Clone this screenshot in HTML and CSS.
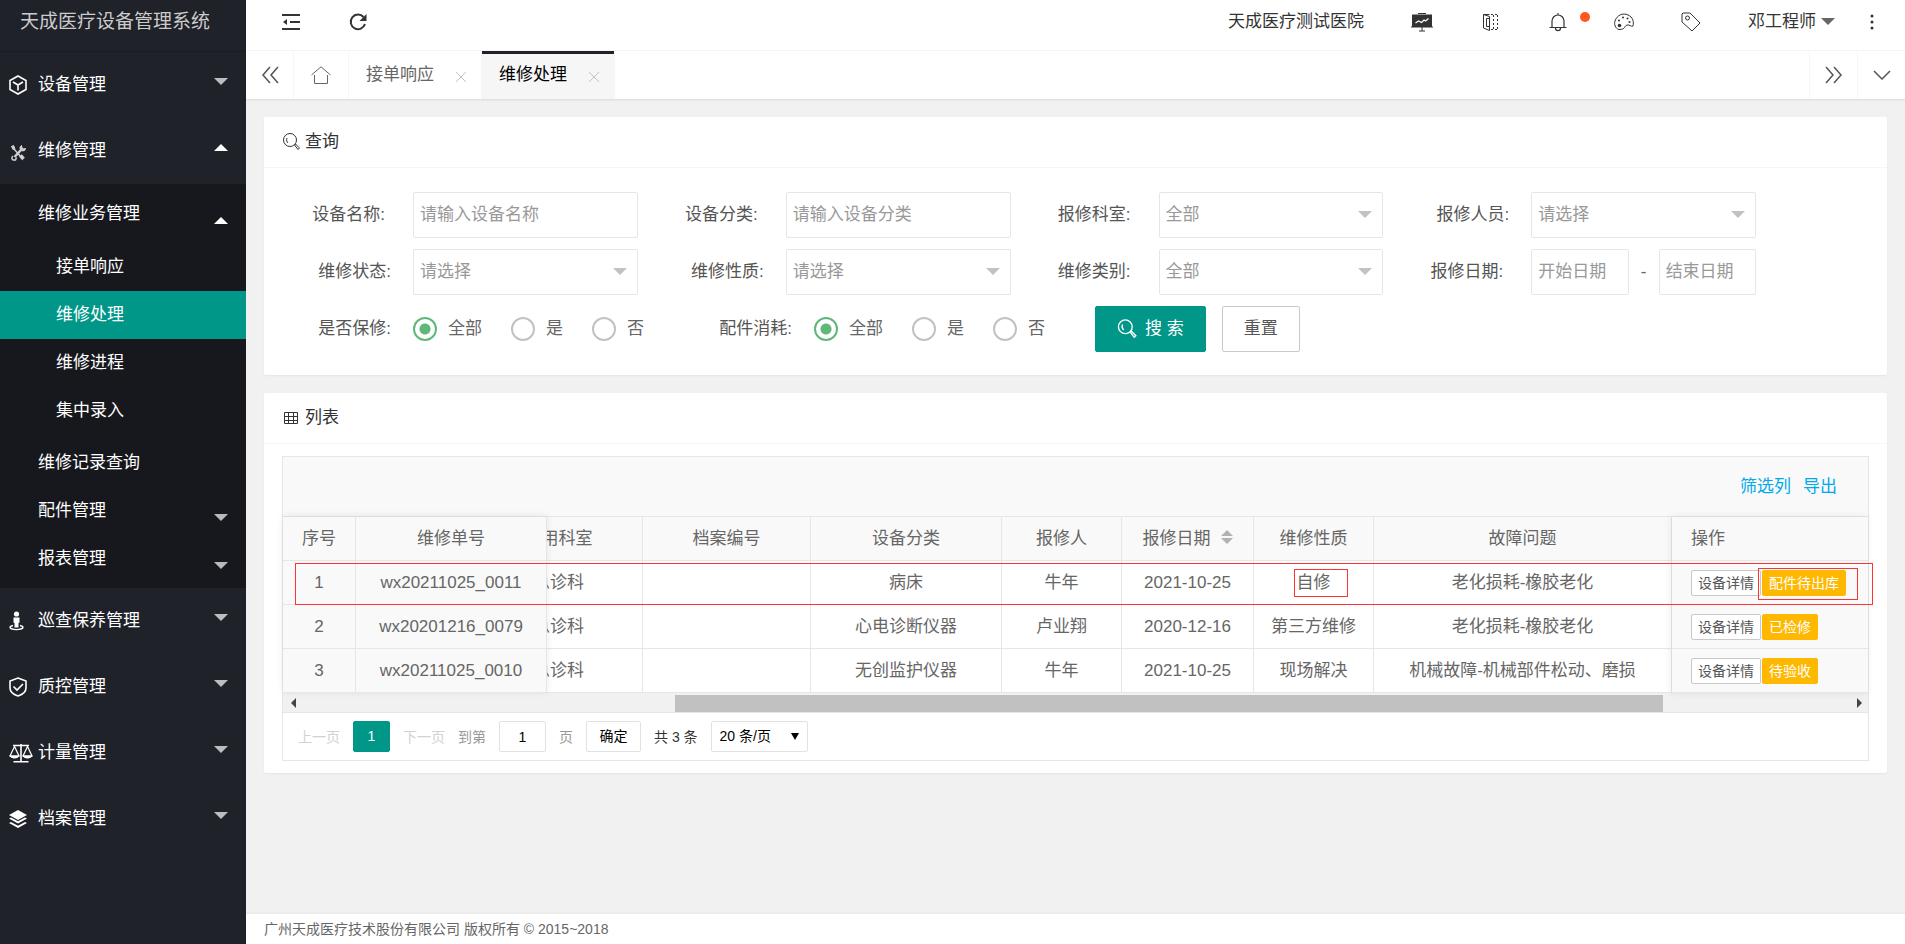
FILE: index.html
```html
<!DOCTYPE html>
<html lang="zh-CN">
<head>
    <meta charset="UTF-8">
    <title>天成医疗设备管理系统</title>
    <link rel="stylesheet" href="styles.css">
</head>
<body>

    <aside class="side">
        <div class="logo">天成医疗设备管理系统</div>
        <nav class="menu">
            <a class="menu-item" href="#">
                <svg class="menu-icon" viewBox="0 0 18 20" fill="none" stroke="currentColor" stroke-width="1.600"><path d="M9 1l8 4.500v9L9 19l-8-4.500v-9z"/><path d="M4 7l5 3 5-3M9 10v5.500"/></svg>
                <span>设备管理</span><i class="caret"></i>
            </a>
            <a class="menu-item" href="#">
                <svg class="menu-icon low" viewBox="0 0 18 20" fill="none" stroke="currentColor"><path d="M5 6l8 9" stroke-width="1.500"/><path d="M2.500 3.500l2-1 1.500 3-2 1z" fill="currentColor"/><path d="M11.500 12.500l3 3.500" stroke-width="3.500"/><path d="M12 7l-6.500 7" stroke-width="2.500"/><path d="M12.500 2.500c-2 1-2 4 0 5s4 0 4-2l-2 .5-1.500-1.500z" fill="currentColor"/><path d="M4 13c-1.500 1-1.500 3 0 4h2.500l1-2.500" stroke-width="1.500"/></svg>
                <span>维修管理</span><i class="caret up"></i>
            </a>
            <div class="submenu">
                <a class="sub-item" href="#"><span>维修业务管理</span><i class="caret up"></i></a>
                <div class="submenu-inner">
                    <a class="sub-item deep" href="#">接单响应</a>
                    <a class="sub-item deep active" href="#">维修处理</a>
                    <a class="sub-item deep" href="#">维修进程</a>
                    <a class="sub-item deep" href="#">集中录入</a>
                </div>
                <a class="sub-item" href="#">维修记录查询</a>
                <a class="sub-item" href="#"><span>配件管理</span><i class="caret"></i></a>
                <a class="sub-item" href="#"><span>报表管理</span><i class="caret"></i></a>
            </div>
            <a class="menu-item" href="#">
                <svg class="menu-icon" viewBox="0 0 18 20"><circle cx="7.500" cy="3" r="2.600" fill="currentColor"/><path d="M4.500 6.500h6v5l-1 .5v4.500h-4V12l-1-.5z" fill="currentColor"/><path d="M4 14.500c-3 .5-4 2-1.500 3.300 2.500 1 7.500 1 10 0 2.500-1.300 1.500-2.800-1.500-3.300" fill="none" stroke="currentColor" stroke-width="1.500"/></svg>
                <span>巡查保养管理</span><i class="caret"></i>
            </a>
            <a class="menu-item" href="#">
                <svg class="menu-icon" viewBox="0 0 18 20" fill="none" stroke="currentColor" stroke-width="1.600"><path d="M9 1l8 3v7c0 4-3.500 6.500-8 8-4.500-1.500-8-4-8-8V4z"/><path d="M4.500 9.500l3.500 3.500 6-6"/></svg>
                <span>质控管理</span><i class="caret"></i>
            </a>
            <a class="menu-item" href="#">
                <svg class="menu-icon wide" viewBox="0 0 24 20" fill="none" stroke="currentColor" stroke-width="1.200"><path d="M12 1v17M4 2.500h16M4.500 18.700h15" stroke-width="1.600"/><path d="M5.500 3.500L1 13h9zM18.500 3.500L14 13h9z"/><path d="M.5 12.500h10c-1 4-9 4-10 0zM13.500 12.500h10c-1 4-9 4-10 0z" fill="currentColor" stroke="none"/></svg>
                <span>计量管理</span><i class="caret"></i>
            </a>
            <a class="menu-item" href="#">
                <svg class="menu-icon" viewBox="0 0 18 20" fill="currentColor"><path d="M9 1l9 5-9 5-9-5z"/><path d="M0 9.500l2-1 7 3.800 7-3.800 2 1-9 5z"/><path d="M0 14l2-1 7 3.800 7-3.800 2 1-9 5z"/></svg>
                <span>档案管理</span><i class="caret"></i>
            </a>
        </nav>
    </aside>

    <div class="main">
        <header class="topbar">
            <button class="icon-btn" aria-label="侧边伸缩">
                <svg width="18" height="18" viewBox="0 0 18 18" fill="none" stroke="currentColor" stroke-width="2"><path d="M0 2h18M8 9h10M0 16h18"/><path d="M5 6v6L1 9z" fill="currentColor" stroke="none"/></svg>
            </button>
            <button class="icon-btn refresh" aria-label="刷新">
                <svg width="18" height="18" viewBox="0 0 18 18" fill="none" stroke="currentColor" stroke-width="2"><path d="M14.500 4A7.300 7.300 0 1 0 16 11"/><path d="M17.500 1v7h-7z" fill="currentColor" stroke="none"/></svg>
            </button>
            <div class="topbar-right">
                <span class="hospital">天成医疗测试医院</span>
                <button class="icon-btn" aria-label="看板">
                    <svg width="22" height="20" viewBox="0 0 22 20"><path d="M1 2.500h20V15H1z" fill="currentColor"/><path d="M7 1.500h8M0 15h22M11 15v4M8 19h6" stroke="currentColor"/><path d="M4.500 11l3-2 3 1.500 2.500-2.500 1.500 1 3-2.500" fill="none" stroke="#fff" stroke-width="1.200"/></svg>
                </button>
                <button class="icon-btn book" aria-label="手册">
                    <svg width="18" height="18" viewBox="0 0 18 18" fill="none" stroke="currentColor"><path d="M1.500 1.500l6 2v14l-6-2.500zM1.500 1.500h6M4.500 5.500h3v8h-3z"/><path d="M9 1.500h7M9 16.500h7M11.500 2v14M15.500 2v14" stroke-dasharray="2 2"/></svg>
                </button>
                <button class="icon-btn bell" aria-label="消息">
                    <svg width="18" height="20" viewBox="0 0 18 20" fill="none" stroke="currentColor" stroke-width="1.200"><path d="M9 1v2M3 15.500V9a6 6 0 0 1 12 0v6.500M.5 15.500h17M6.500 16c0 3.500 5 3.500 5 0"/></svg>
                    <i class="dot"></i>
                </button>
                <button class="icon-btn palette" aria-label="主题">
                    <svg width="20" height="18" viewBox="0 0 20 18" fill="none" stroke="currentColor"><path d="M5 16.500C1 15.500 0 11 1 8c2-6 8-8.500 13-6 5 2 6 7 5 11-2 1-3-1.500-6-1-3 1-1 4.500-8 4.500z"/><g fill="currentColor" stroke="none"><circle cx="5" cy="7.500" r="1"/><circle cx="9" cy="4.500" r="1"/><circle cx="13.500" cy="5.500" r="1"/><circle cx="15.500" cy="9" r="1"/><circle cx="5.500" cy="12.500" r="1.800"/></g></svg>
                </button>
                <button class="icon-btn tag" aria-label="便签">
                    <svg width="20" height="20" viewBox="0 0 20 20" fill="none" stroke="currentColor"><path d="M1 2l1-1h7l10 10-8 8L1 10z"/><circle cx="6.500" cy="6" r="2"/></svg>
                </button>
                <a class="user" href="#">邓工程师<i class="caret"></i></a>
                <button class="icon-btn more" aria-label="更多">
                    <svg width="4" height="16" viewBox="0 0 4 16" fill="currentColor"><circle cx="2" cy="2" r="1.500"/><circle cx="2" cy="8" r="1.500"/><circle cx="2" cy="14" r="1.500"/></svg>
                </button>
            </div>
        </header>

        <div class="tabs">
            <button class="tab-ctrl first" aria-label="向左">
                <svg width="18" height="18" viewBox="0 0 18 18" fill="none" stroke="currentColor" stroke-width="1.500"><path d="M9 1L2 9l7 8M17 1l-7 8 7 8"/></svg>
            </button>
            <a class="tab home" href="#" aria-label="首页">
                <svg width="20" height="18" viewBox="0 0 20 18" fill="none" stroke="currentColor"><path d="M.5 9L10 .8 19.500 9M3.500 9v8.500h13V9"/></svg>
            </a>
            <a class="tab" href="#">接单响应<svg class="close" viewBox="0 0 10 10" stroke="currentColor"><path d="M0 0l10 10M10 0L0 10"/></svg></a>
            <a class="tab current" href="#">维修处理<svg class="close" viewBox="0 0 10 10" stroke="currentColor"><path d="M0 0l10 10M10 0L0 10"/></svg></a>
            <button class="tab-ctrl next" aria-label="向右">
                <svg width="18" height="18" viewBox="0 0 18 18" fill="none" stroke="currentColor" stroke-width="1.500"><path d="M1 1l7 8-7 8M9 1l7 8-7 8"/></svg>
            </button>
            <button class="tab-ctrl" aria-label="标签操作">
                <svg width="18" height="10" viewBox="0 0 18 10" fill="none" stroke="currentColor" stroke-width="1.500"><path d="M1 1l8 8 8-8"/></svg>
            </button>
        </div>

        <main class="content">
            <section class="card">
                <h2 class="card-header">
                    <svg width="18" height="18" viewBox="0 0 18 18" fill="none" stroke="currentColor"><circle cx="8" cy="7" r="6.500"/><path d="M5 5c-1 2 0 4 1 5M12.500 12l1-1 4 4-1.500 1.500z"/></svg>
                    查询
                </h2>
                <form class="search-form">
                    <div class="form-grid">
                        <div class="field">
                            <label class="spaced" for="name">设备名称:</label>
                            <input class="control" id="name" type="text" placeholder="请输入设备名称">
                        </div>
                        <div class="field">
                            <label class="spaced" for="category">设备分类:</label>
                            <input class="control" id="category" type="text" placeholder="请输入设备分类">
                        </div>
                        <div class="field">
                            <label class="spaced" for="dept">报修科室:</label>
                            <div class="select"><select class="control" id="dept"><option>全部</option></select></div>
                        </div>
                        <div class="field">
                            <label for="person">报修人员:</label>
                            <div class="select"><select class="control" id="person"><option>请选择</option></select></div>
                        </div>
                        <div class="field">
                            <label for="status">维修状态:</label>
                            <div class="select"><select class="control" id="status"><option>请选择</option></select></div>
                        </div>
                        <div class="field">
                            <label for="nature">维修性质:</label>
                            <div class="select"><select class="control" id="nature"><option>请选择</option></select></div>
                        </div>
                        <div class="field">
                            <label class="spaced" for="type">维修类别:</label>
                            <div class="select"><select class="control" id="type"><option>全部</option></select></div>
                        </div>
                        <div class="field">
                            <label class="spaced" for="start">报修日期:</label>
                            <input class="control" id="start" type="text" placeholder="开始日期">
                            <span class="dash">-</span>
                            <input class="control" type="text" placeholder="结束日期" aria-label="结束日期">
                        </div>
                    </div>
                    <div class="form-row">
                        <div class="radio-group" role="radiogroup" aria-labelledby="warranty">
                            <span class="group-label" id="warranty">是否保修:</span>
                            <label class="radio"><input type="radio" name="warranty" checked>全部</label>
                            <label class="radio"><input type="radio" name="warranty">是</label>
                            <label class="radio"><input type="radio" name="warranty">否</label>
                        </div>
                        <div class="radio-group" role="radiogroup" aria-labelledby="parts">
                            <span class="group-label" id="parts">配件消耗:</span>
                            <label class="radio"><input type="radio" name="parts" checked>全部</label>
                            <label class="radio"><input type="radio" name="parts">是</label>
                            <label class="radio"><input type="radio" name="parts">否</label>
                        </div>
                        <div class="form-actions">
                            <button class="btn primary" type="button">
                                <svg width="20" height="20" viewBox="0 0 18 18" fill="none" stroke="currentColor" stroke-width="1.200"><circle cx="7.500" cy="7" r="6.200"/><path d="M5 5c-1 2 0 4 1 5M12 12l1-1 4 4-1.500 1.500z"/></svg>
                                搜 索
                            </button>
                            <button class="btn" type="reset">重置</button>
                        </div>
                    </div>
                </form>
            </section>

            <section class="card">
                <h2 class="card-header">
                    <svg width="18" height="18" viewBox="0 0 18 18" fill="none" stroke="currentColor"><path d="M2.500 3.500h13v11h-13zM2.500 7.500h13M2.500 11.500h13M6.500 3.500v11M11.500 3.500v11"/></svg>
                    列表
                </h2>
                <div class="table-box">
                    <div class="toolbar">
                        <a href="#">筛选列</a>
                        <a href="#">导出</a>
                    </div>
                    <div class="table-view">
                        <table class="fixed-left">
                            <colgroup><col class="w-no"><col class="w-order"></colgroup>
                            <thead><tr><th>序号</th><th>维修单号</th></tr></thead>
                            <tbody>
                                <tr><td>1</td><td>wx20211025_0011</td></tr>
                                <tr><td>2</td><td>wx20201216_0079</td></tr>
                                <tr><td>3</td><td>wx20211025_0010</td></tr>
                            </tbody>
                        </table>
                        <div class="table-body">
                            <table>
                                <colgroup><col class="w-dept"><col class="w-file"><col class="w-cat"><col class="w-person"><col class="w-date"><col class="w-nature"><col class="w-fault"></colgroup>
                                <thead>
                                    <tr>
                                        <th>使用科室</th><th>档案编号</th><th>设备分类</th><th>报修人</th>
                                        <th>报修日期<svg class="sort" width="12" height="14" viewBox="0 0 12 14" fill="currentColor"><path d="M0 6l6-6 6 6zM0 8h12l-6 6z"/></svg></th>
                                        <th>维修性质</th><th>故障问题</th>
                                    </tr>
                                </thead>
                                <tbody>
                                    <tr><td>急诊科</td><td></td><td>病床</td><td>牛年</td><td>2021-10-25</td><td><span class="marked">自修<i class="mark mark-text"></i></span></td><td>老化损耗-橡胶老化</td></tr>
                                    <tr><td>急诊科</td><td></td><td>心电诊断仪器</td><td>卢业翔</td><td>2020-12-16</td><td>第三方维修</td><td>老化损耗-橡胶老化</td></tr>
                                    <tr><td>急诊科</td><td></td><td>无创监护仪器</td><td>牛年</td><td>2021-10-25</td><td>现场解决</td><td>机械故障-机械部件松动、磨损</td></tr>
                                </tbody>
                            </table>
                        </div>
                        <table class="fixed-right">
                            <thead><tr><th>操作</th></tr></thead>
                            <tbody>
                                <tr><td><div class="ops"><button class="btn-xs">设备详情</button><span class="marked"><button class="btn-xs warm">配件待出库</button><i class="mark mark-btn"></i></span></div></td></tr>
                                <tr><td><div class="ops"><button class="btn-xs">设备详情</button><button class="btn-xs warm">已检修</button></div></td></tr>
                                <tr><td><div class="ops"><button class="btn-xs">设备详情</button><button class="btn-xs warm">待验收</button></div></td></tr>
                            </tbody>
                        </table>
                        <i class="mark mark-row"></i>
                    </div>
                    <div class="scrollbar">
                        <i class="arrow-left"></i>
                        <i class="track-before"></i>
                        <i class="thumb"></i>
                        <i class="track-after"></i>
                        <i class="arrow-right"></i>
                    </div>
                    <div class="pager">
                        <span class="disabled">上一页</span>
                        <span class="page-current">1</span>
                        <span class="disabled">下一页</span>
                        <label class="skip" for="page">到第</label>
                        <input class="page-input" id="page" type="text" value="1">
                        <span class="skip">页</span>
                        <button class="page-btn">确定</button>
                        <span class="total">共 3 条</span>
                        <div class="page-size"><select aria-label="每页条数"><option>20 条/页</option></select></div>
                    </div>
                </div>
            </section>
        </main>

        <footer class="footer">广州天成医疗技术股份有限公司 版权所有 © 2015~2018</footer>
    </div>

</body>
</html>
```

FILE: styles.css
```css
* {
    box-sizing: border-box;
}

body {
    display: flex;
    min-height: 100vh;
    margin: 0;
    font-family: "Liberation Sans", "Noto Sans CJK SC", sans-serif;
    font-size: 17px;
    line-height: 24px;
    color: #666;
    background: #f1f1f1;
}

a {
    color: inherit;
    text-decoration: none;
}

button, input, select {
    font: inherit;
    color: inherit;
}

button {
    padding: 0;
    border: none;
    background: none;
}

svg {
    display: block;
    flex: none;
}

.caret {
    border: 7px solid transparent;
    border-top-color: currentColor;
    border-bottom: none;
}

.caret.up {
    border-top: none;
    border-bottom: 7px solid #fff;
}

/* sidebar */
.side {
    flex: none;
    width: 246px;
    color: #fff;
    background: #20222a;
}

.logo {
    height: 52px;
    padding: 10px 20px;
    font-size: 19px;
    color: #ccc;
    border-bottom: 1px solid #1b1d23;
}

.menu-item {
    display: flex;
    align-items: center;
    height: 66px;
    padding: 0 18px 0 9px;
}

.menu-icon {
    width: 18px;
    height: 20px;
    margin-right: 11px;
}

.menu-icon.wide {
    width: 24px;
    margin-right: 5px;
}

.menu-icon.low {
    margin-top: 4px;
    opacity: .8;
}

.side .caret {
    margin-left: auto;
    color: rgba(255, 255, 255, .7);
}

.menu-item .caret {
    margin-bottom: 7px;
}

.submenu {
    padding: 6px 0 5px;
    background: #17181d;
}

.submenu-inner {
    padding: 5px 0 4px;
}

.sub-item {
    display: flex;
    align-items: center;
    height: 48px;
    padding: 0 18px 0 38px;
}

.sub-item.deep {
    padding-left: 56px;
}

.sub-item.active {
    background: #009688;
}

.sub-item .caret {
    margin-top: 12px;
}

/* top bar */
.main {
    flex: 1;
    display: flex;
    flex-direction: column;
    min-width: 0;
}

.topbar {
    display: flex;
    align-items: center;
    height: 51px;
    padding: 0 31px 7px 36px;
    color: #333;
    background: #fff;
    border-bottom: 1px solid #f6f6f6;
}

.icon-btn {
    position: relative;
    display: flex;
}

.refresh {
    margin-left: 49px;
}

.topbar-right {
    display: flex;
    align-items: center;
    margin-left: auto;
}

.hospital {
    margin-right: 47px;
}

.book,
.bell {
    margin-left: 49px;
}

.dot {
    position: absolute;
    top: 0;
    right: -23px;
    width: 10px;
    height: 10px;
    border-radius: 50%;
    background: #ff5722;
}

.palette {
    margin-left: 47px;
}

.tag,
.user {
    margin-left: 47px;
}

.user {
    display: flex;
    align-items: center;
    gap: 5px;
}

.user .caret {
    border-top-color: #666;
}

.more {
    margin-left: 35px;
}

/* page tabs */
.tabs {
    display: flex;
    height: 48px;
    background: #fff;
    box-shadow: 0 1px 2px rgba(0, 0, 0, .1);
}

.tab-ctrl {
    display: flex;
    align-items: center;
    justify-content: center;
    width: 48px;
    color: #555;
    border-left: 1px solid #f6f6f6;
}

.tab-ctrl.first {
    border-left: none;
    border-right: 1px solid #f6f6f6;
}

.tab-ctrl.next {
    margin-left: auto;
}

.tab {
    display: flex;
    align-items: center;
    padding: 0 15px 0 17px;
    border-right: 1px solid #f6f6f6;
}

.tab.home {
    padding: 0 17px;
}

.tab.current {
    color: #000;
    background: #f6f6f6;
    box-shadow: inset 0 3px #20222a;
}

.close {
    width: 10px;
    height: 10px;
    margin: 4px 0 0 22px;
    color: #c2c2c2;
}

/* cards */
.content {
    flex: 1;
    padding: 18px;
}

.card {
    margin-bottom: 18px;
    background: #fff;
    border-radius: 2px;
    box-shadow: 0 1px 2px rgba(0, 0, 0, .05);
}

.card-header {
    display: flex;
    align-items: center;
    gap: 5px;
    height: 51px;
    margin: 0;
    padding: 0 18px;
    font-size: 17px;
    font-weight: normal;
    color: #333;
    border-bottom: 1px solid #f6f6f6;
}

/* search form */
.search-form {
    padding: 24px 131px 23px 18px;
}

.form-grid {
    display: grid;
    grid-template-columns: repeat(4, 1fr);
    gap: 11px 17px;
}

.field {
    display: flex;
    align-items: center;
}

.field > label,
.group-label {
    flex: none;
    width: 131px;
    padding-right: 22px;
    text-align: right;
    color: #555;
}

.field > label.spaced {
    padding-right: 28px;
}

.control {
    flex: 1;
    width: 100%;
    min-width: 0;
    height: 46px;
    padding: 0 6px;
    color: #999;
    background: #fff;
    border: 1px solid #e6e6e6;
    border-radius: 2px;
}

.control::placeholder {
    color: #999;
    opacity: 1;
}

.select {
    position: relative;
    flex: 1;
}

.select select {
    display: block;
    appearance: none;
}

.select::after {
    content: "";
    position: absolute;
    top: 19px;
    right: 11px;
    border: 7px solid transparent;
    border-top-color: #c2c2c2;
    border-bottom: none;
    pointer-events: none;
}

.dash {
    width: 30px;
    text-align: center;
}

.form-row {
    display: flex;
    gap: 10px;
    margin-top: 11px;
}

.radio-group {
    display: flex;
    align-items: center;
}

.radio {
    display: flex;
    align-items: center;
    gap: 11px;
    margin-right: 29px;
}

.radio input {
    appearance: none;
    width: 24px;
    height: 24px;
    margin: 0;
    border: 2px solid #c2c2c2;
    border-radius: 50%;
}

.radio input:checked {
    border-color: #5fb878;
    background: radial-gradient(circle, #5fb878 5px, transparent 6px);
}

.form-actions {
    display: flex;
    gap: 16px;
    margin-left: 11px;
}

.btn {
    display: flex;
    align-items: center;
    gap: 8px;
    height: 46px;
    padding: 0 21px;
    color: #555;
    background: #fff;
    border: 1px solid #c9c9c9;
    border-radius: 2px;
    white-space: nowrap;
}

.btn.primary {
    color: #fff;
    background: #009688;
    border-color: #009688;
}

/* table */
.table-box {
    margin: 12px 18px 0;
    border: 1px solid #e6e6e6;
}

.card:last-child {
    margin-bottom: 0;
    padding-bottom: 12px;
}

.toolbar {
    display: flex;
    align-items: center;
    justify-content: flex-end;
    gap: 12px;
    height: 60px;
    padding: 0 31px;
    color: #01aaed;
    background: #f9f9f9;
    border-bottom: 1px solid #e6e6e6;
}

.table-view {
    position: relative;
    display: flex;
}

table {
    flex: none;
    table-layout: fixed;
    border-spacing: 0;
}

th, td {
    height: 44px;
    padding: 0;
    font-weight: normal;
    text-align: center;
    white-space: nowrap;
    border-right: 1px solid #e6e6e6;
    border-bottom: 1px solid #e6e6e6;
}

th {
    background: #f9f9f9;
}

/* scrolled towards its last column, the rest stays under the left block */
.table-body {
    flex: 1;
    display: flex;
    justify-content: flex-end;
    min-width: 0;
    overflow: hidden;
}

.table-body table {
    width: 1197px;
}

.fixed-left,
.fixed-right {
    z-index: 1;
    background: #f9f9f9;
}

.fixed-left {
    width: 264px;
    box-shadow: 0 -1px 8px rgba(0, 0, 0, .08);
}

.fixed-right {
    width: 196px;
    box-shadow: -1px 0 8px rgba(0, 0, 0, .08);
}

.fixed-right th,
.fixed-right td {
    padding-left: 19px;
    text-align: left;
    border-right: none;
}

.w-no { width: 73px; }
.w-order { width: 191px; }
.w-dept { width: 168px; }
.w-file { width: 168px; }
.w-cat { width: 191px; }
.w-person { width: 120px; }
.w-date { width: 132px; }
.w-nature { width: 120px; }
.w-fault { width: 298px; }

.sort {
    display: inline-block;
    margin-left: 10px;
    color: #b2b2b2;
}

.ops {
    display: flex;
    gap: 1px;
}

.btn-xs {
    display: block;
    height: 26px;
    padding: 0 6px;
    font-size: 14px;
    line-height: 24px;
    color: #555;
    background: #fff;
    border: 1px solid #c9c9c9;
    border-radius: 2px;
}

.btn-xs.warm {
    color: #fff;
    background: #ffb800;
    border-color: #ffb800;
}

/* red highlight frames */
.marked {
    position: relative;
}

.mark {
    position: absolute;
    z-index: 2;
    border: 1px solid #f33;
    pointer-events: none;
}

.mark-row {
    top: 46px;
    left: 12px;
    right: -5px;
    height: 42px;
}

.mark-text {
    top: -4px;
    left: -3px;
    right: -17px;
    height: 28px;
}

.mark-btn {
    top: -2px;
    left: -4px;
    right: -12px;
    height: 32px;
}

.scrollbar {
    display: flex;
    align-items: flex-end;
    height: 20px;
    padding: 0 6px 0 8px;
    background: #f1f1f1;
    border-bottom: 1px solid #e6e6e6;
}

.arrow-left,
.arrow-right {
    align-self: center;
    border: 5px solid transparent;
}

.arrow-left {
    border-right-color: #444;
    border-left: none;
}

.arrow-right {
    border-left-color: #444;
    border-right: none;
}

.track-before { flex: 379; }
.track-after { flex: 194; }

.thumb {
    flex: 987;
    height: 17px;
    background: #c1c1c1;
}

/* pagination */
.pager {
    display: flex;
    align-items: center;
    gap: 13px;
    height: 47px;
    padding: 0 15px;
    font-size: 14px;
    color: #333;
}

.disabled {
    color: #d2d2d2;
}

.skip {
    color: #999;
}

.page-current,
.page-input,
.page-btn,
.page-size select {
    height: 31px;
    line-height: 29px;
    text-align: center;
    border: 1px solid #e2e2e2;
    border-radius: 2px;
}

.page-current {
    width: 37px;
    color: #fff;
    background: #009688;
    border-color: #009688;
}

.page-input {
    width: 47px;
    padding: 0;
    color: #000;
}

.page-btn {
    width: 55px;
    color: #000;
}

.page-size {
    position: relative;
}

.page-size select {
    display: block;
    width: 97px;
    padding: 0 8px;
    text-align: left;
    color: #000;
    background: #fff;
    appearance: none;
}

.page-size::after {
    content: "";
    position: absolute;
    top: 12px;
    right: 9px;
    border: 4px solid transparent;
    border-top: 7px solid #000;
    border-bottom: none;
    pointer-events: none;
}

.footer {
    height: 30px;
    padding: 0 18px;
    font-size: 14px;
    line-height: 30px;
    background: #fff;
    box-shadow: 0 -1px 2px rgba(0, 0, 0, .05);
}
```
